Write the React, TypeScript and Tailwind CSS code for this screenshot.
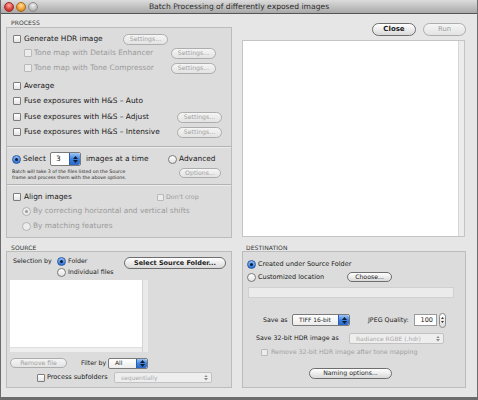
import React from 'react';

const T = 'text-[7.4px] leading-none whitespace-nowrap';

function Cb({ dis = false, small = false }: { dis?: boolean; small?: boolean }) {
  return (
    <span
      className={`block shrink-0 rounded-[1px] border ${
        dis ? 'border-[#b9b9b9] bg-[#ececec]' : 'border-[#7c7c7c] bg-linear-to-b from-[#ffffff] to-[#e4e4e4]'
      } ${small ? 'w-[7px] h-[7px]' : 'w-[8px] h-[8px]'}`}
    />
  );
}

function Rd({ on = false, dis = false }: { on?: boolean; dis?: boolean }) {
  if (on && !dis)
    return (
      <span className="w-[9px] h-[9px] shrink-0 rounded-full border border-[#2a5aa6] bg-linear-to-b from-[#8dbdf5] to-[#2f6fd2] flex items-center justify-center">
        <span className="block w-[3px] h-[3px] rounded-full bg-[#0e1d36]" />
      </span>
    );
  if (on && dis)
    return (
      <span className="w-[9px] h-[9px] shrink-0 rounded-full border border-[#b0b0b0] bg-[#ececec] flex items-center justify-center">
        <span className="block w-[3px] h-[3px] rounded-full bg-[#9a9a9a]" />
      </span>
    );
  return (
    <span
      className={`block w-[9px] h-[9px] shrink-0 rounded-full border ${
        dis ? 'border-[#b4b4b4] bg-[#ececec]' : 'border-[#7a7a7a] bg-linear-to-b from-[#ffffff] to-[#e2e2e2]'
      }`}
    />
  );
}

function Btn({
  children,
  dis = false,
  cls,
  txt = 'text-[6.2px]',
}: {
  children: React.ReactNode;
  dis?: boolean;
  cls: string;
  txt?: string;
}) {
  return (
    <div
      className={`${cls} ${txt} leading-none whitespace-nowrap shrink-0 rounded-full border flex items-center justify-center ${
        dis
          ? 'border-[#adadad] text-[#a0a0a0] bg-linear-to-b from-[#f5f5f5] to-[#e3e3e3]'
          : 'border-[#6e6e6e] text-[#1c1c1c] bg-linear-to-b from-[#ffffff] to-[#d9d9d9]'
      }`}
    >
      {children}
    </div>
  );
}

function BlueArrows() {
  return (
    <div className="w-[11px] h-full shrink-0 bg-linear-to-b from-[#9cc6f6] via-[#3f82dc] to-[#2a68c6] rounded-r-[2px] flex flex-col items-center justify-center gap-[1px] border-l border-[#2b5fae]">
      <svg width="5" height="3" viewBox="0 0 5 3">
        <path d="M0 3 L2.5 0 L5 3 Z" fill="#0d1b33" />
      </svg>
      <svg width="5" height="3" viewBox="0 0 5 3">
        <path d="M0 0 L2.5 3 L5 0 Z" fill="#0d1b33" />
      </svg>
    </div>
  );
}

function GrayArrows() {
  return (
    <div className="w-[11px] h-full shrink-0 flex flex-col items-center justify-center gap-[1px]">
      <svg width="4" height="2.5" viewBox="0 0 4 2.5">
        <path d="M0 2.5 L2 0 L4 2.5 Z" fill="#8a8a8a" />
      </svg>
      <svg width="4" height="2.5" viewBox="0 0 4 2.5">
        <path d="M0 0 L2 2.5 L4 0 Z" fill="#8a8a8a" />
      </svg>
    </div>
  );
}

function Popup({ label, cls, dis = false }: { label: string; cls: string; dis?: boolean }) {
  return (
    <div
      className={`${cls} shrink-0 rounded-[2px] border flex items-center ${
        dis ? 'border-[#c2c2c2] bg-[#eeeeee]' : 'border-[#7a7a7a] bg-linear-to-b from-[#ffffff] to-[#ececec]'
      }`}
    >
      <span className={`flex-1 pl-[6px] text-[6px] leading-none whitespace-nowrap ${dis ? 'text-[#a8a8a8]' : 'text-[#1c1c1c]'}`}>
        {label}
      </span>
      {dis ? <GrayArrows /> : <BlueArrows />}
    </div>
  );
}

function Sep() {
  return <div className="h-[2px] border-t border-[#b3b3b3] border-b border-b-[#ececec]" />;
}

function Label({ children, cls = '' }: { children: React.ReactNode; cls?: string }) {
  return <div className={`${cls} text-[6px] leading-[7px] text-[#333] tracking-[0.1px]`}>{children}</div>;
}

export default function App() {
  const dark = 'text-[#1a1a1a]';
  const gray = 'text-[#9a9a9a]';
  return (
    <div className="w-[478px] h-[400px] bg-[#e6e6e6] border-l border-r border-b-[3px] border-[#6c6c6c] flex flex-col overflow-hidden font-['DejaVu_Sans',sans-serif]">
      {/* Title bar */}
      <div className="h-[14px] shrink-0 grid grid-cols-[1fr_auto_1fr] items-center bg-linear-to-b from-[#dcdcdc] to-[#a9a9a9] border-b border-[#555]">
        <div className="flex items-center gap-[2px] ml-[3px]">
          <span className="block w-[10px] h-[10px] rounded-full border border-[#9a2a24] bg-[radial-gradient(circle_at_50%_30%,#ffb0a8,#e0443e_55%,#a8211b)]" />
          <span className="block w-[10px] h-[10px] rounded-full border border-[#a86a16] bg-[radial-gradient(circle_at_50%_30%,#ffe0a0,#f2a33a_55%,#b8700f)]" />
          <span className="block w-[10px] h-[10px] rounded-full border border-[#8d8d8d] bg-[radial-gradient(circle_at_50%_30%,#f0f0f0,#bdbdbd_60%,#949494)]" />
        </div>
        <div className="text-[7.6px] leading-none text-[#2c2c2c] whitespace-nowrap">
          Batch Processing of differently exposed images
        </div>
        <div />
      </div>

      {/* Body */}
      <div className="flex-1 flex pl-[5px] gap-[10px]">
        {/* Left column */}
        <div className="w-[226px] pt-[4px] flex flex-col">
          <Label cls="h-[9px] pl-[5px] pt-[1px]">PROCESS</Label>
          <div className="h-[211px] border border-[#bcbcbc] bg-[#dcdcdc] flex flex-col pt-[4px]">
            <div className="h-[14px] flex items-center">
              <span className="flex ml-[6px]"><Cb /></span>
              <span className={`ml-[3px] w-[99px] ${T} ${dark}`}>Generate HDR image</span>
              <Btn dis cls="w-[45px] h-[11px]">Settings...</Btn>
            </div>
            <div className="h-[14px] flex items-center">
              <span className="flex ml-[17px]"><Cb dis /></span>
              <span className={`ml-[1px] w-[138px] pl-[1px] ${T} ${gray}`}>Tone map with Details Enhancer</span>
              <Btn dis cls="w-[45px] h-[11px]">Settings...</Btn>
            </div>
            <div className="h-[14px] mt-[1px] flex items-center">
              <span className="flex ml-[17px]"><Cb dis /></span>
              <span className={`ml-[1px] w-[138px] pl-[1px] ${T} ${gray}`}>Tone map with Tone Compressor</span>
              <Btn dis cls="w-[45px] h-[11px]">Settings...</Btn>
            </div>
            <div className="h-[14px] mt-[4px] flex items-center">
              <span className="flex ml-[6px]"><Cb /></span>
              <span className={`ml-[3px] ${T} ${dark}`}>Average</span>
            </div>
            <div className="h-[14px] mt-[1px] flex items-center">
              <span className="flex ml-[6px]"><Cb /></span>
              <span className={`ml-[3px] ${T} ${dark}`}>Fuse exposures with H&amp;S – Auto</span>
            </div>
            <div className="h-[14px] mt-[2px] flex items-center">
              <span className="flex ml-[6px]"><Cb /></span>
              <span className={`ml-[3px] w-[153px] ${T} ${dark}`}>Fuse exposures with H&amp;S – Adjust</span>
              <Btn dis cls="w-[45px] h-[11px]">Settings...</Btn>
            </div>
            <div className="h-[14px] mt-[1px] flex items-center">
              <span className="flex ml-[6px]"><Cb /></span>
              <span className={`ml-[3px] w-[153px] ${T} ${dark}`}>Fuse exposures with H&amp;S – Intensive</span>
              <Btn dis cls="w-[45px] h-[11px]">Settings...</Btn>
            </div>
            <div className="mt-[7px]"><Sep /></div>

            <div className="h-[14px] mt-[4px] flex items-center">
              <span className="flex ml-[5px]"><Rd on /></span>
              <span className={`ml-[2px] w-[27px] ${T} ${dark}`}>Select</span>
              <div className="w-[31px] h-[14px] shrink-0 rounded-[2px] border border-[#7a7a7a] bg-white flex items-center">
                <span className={`flex-1 pl-[5px] ${T} ${dark}`}>3</span>
                <BlueArrows />
              </div>
              <span className={`ml-[5px] w-[82px] ${T} ${dark}`}>images at a time</span>
              <Rd />
              <span className={`ml-[2px] ${T} ${dark}`}>Advanced</span>
            </div>
            <div className="h-[14px] mt-[1px] flex items-start">
              <div className="ml-[5px] w-[167px] pt-[2px] text-[4.7px] leading-[6px] text-[#222] whitespace-nowrap">
                Batch will take 3 of the files listed on the Source
                <br />
                frame and process them with the above options.
              </div>
              <Btn dis cls="w-[42px] h-[10px] mt-[1px]">Options...</Btn>
            </div>
            <div className="mt-[3px]"><Sep /></div>

            <div className="h-[14px] mt-[4px] flex items-center">
              <span className="flex ml-[6px]"><Cb /></span>
              <span className={`ml-[3px] w-[133px] ${T} ${dark}`}>Align images</span>
              <Cb dis small />
              <span className={`ml-[2px] text-[6.3px] leading-none whitespace-nowrap ${gray}`}>Don't crop</span>
            </div>
            <div className="h-[14px] flex items-center">
              <span className="flex ml-[15px]"><Rd on dis /></span>
              <span className={`ml-[2px] ${T} ${gray}`}>By correcting horizontal and vertical shifts</span>
            </div>
            <div className="h-[14px] mt-[1px] flex items-center">
              <span className="flex ml-[15px]"><Rd dis /></span>
              <span className={`ml-[2px] ${T} ${gray}`}>By matching features</span>
            </div>
          </div>

          <div className="h-[13px] flex items-end">
            <Label cls="pl-[5px]">SOURCE</Label>
          </div>
          <div className="h-[137px] border border-[#bcbcbc] bg-[#dcdcdc] flex flex-col">
            <div className="flex items-start pt-[4px]">
              <span className="ml-[6px] w-[44px] h-[11px] flex items-center text-[6.3px] leading-none whitespace-nowrap text-[#1a1a1a]">
                Selection by
              </span>
              <div className="w-[67px] flex flex-col">
                <div className="h-[11px] flex items-center">
                  <Rd on />
                  <span className="ml-[2px] text-[6.3px] leading-none text-[#1a1a1a]">Folder</span>
                </div>
                <div className="h-[11px] flex items-center">
                  <Rd />
                  <span className="ml-[2px] text-[6.3px] leading-none whitespace-nowrap text-[#1a1a1a]">Individual files</span>
                </div>
              </div>
              <Btn cls="w-[102px] h-[12px] mt-[1px]" txt="text-[6.5px] font-semibold">Select Source Folder...</Btn>
            </div>
            <div className="ml-[3px] mt-[2px] w-[138px] h-[72px] flex bg-white">
              <div className="flex-1 flex flex-col">
                <div className="flex-1 bg-white" />
                <div className="h-[5px] bg-[#eeeeee] border-t border-[#dedede]" />
              </div>
              <div className="w-[6px] bg-[#eaeaea] border-l border-[#d4d4d4]" />
            </div>
            <div className="h-[10px] mt-[6px] flex items-center">
              <Btn dis cls="ml-[3px] w-[57px] h-[10px]">Remove file</Btn>
              <span className="ml-[14px] w-[27px] text-[6.3px] leading-none whitespace-nowrap text-[#1a1a1a]">Filter by</span>
              <Popup label="All" cls="w-[40px] h-[11px]" />
            </div>
            <div className="h-[11px] mt-[4px] flex items-center">
              <span className="flex ml-[30px]"><Cb /></span>
              <span className="ml-[2px] w-[67px] text-[6.5px] leading-none whitespace-nowrap text-[#1a1a1a]">Process subfolders</span>
              <Popup dis label="sequentially" cls="w-[98px] h-[11px]" />
            </div>
          </div>
        </div>

        {/* Right column */}
        <div className="w-[224px] pt-[9px] flex flex-col">
          <div className="h-[13px] flex justify-end gap-[7px]">
            <Btn cls="w-[44px] h-[13px]" txt="text-[7px] font-semibold">Close</Btn>
            <Btn dis cls="w-[43px] h-[13px]" txt="text-[6.8px]">Run</Btn>
          </div>
          <div className="mt-[4px] w-[223px] h-[197px] border border-[#c4c4c4] bg-white flex">
            <div className="flex-1" />
            <div className="w-[6px] bg-[#ececec] border-l border-[#d6d6d6]" />
          </div>

          <div className="h-[14px] flex items-end">
            <Label cls="pl-[4px]">DESTINATION</Label>
          </div>
          <div className="h-[137px] border border-[#bcbcbc] bg-[#dcdcdc] flex flex-col">
            <div className="h-[12px] mt-[6px] flex items-center">
              <span className="flex ml-[4px]"><Rd on /></span>
              <span className="ml-[2px] text-[6.5px] leading-none whitespace-nowrap text-[#1a1a1a]">Created under Source Folder</span>
            </div>
            <div className="h-[12px] mt-[1px] flex items-center">
              <span className="flex ml-[4px]"><Rd /></span>
              <span className="ml-[2px] w-[89px] text-[6.5px] leading-none whitespace-nowrap text-[#1a1a1a]">Customized location</span>
              <Btn cls="w-[45px] h-[10px]">Choose...</Btn>
            </div>
            <div className="mt-[4px] ml-[5px] w-[206px] h-[11px] bg-[#ebebeb] border border-[#d0d0d0]" />
            <div className="h-[12px] mt-[16px] flex items-center">
              <span className="ml-[20px] w-[29px] text-[6.3px] leading-none whitespace-nowrap text-[#1a1a1a]">Save as</span>
              <Popup label="TIFF 16-bit" cls="w-[58px] h-[12px]" />
              <span className="ml-[18px] w-[46px] text-[6.3px] leading-none whitespace-nowrap text-[#1a1a1a]">JPEG Quality:</span>
              <div className="w-[23px] h-[12px] bg-white border border-[#9a9a9a] flex items-center justify-end pr-[3px] text-[6.5px] leading-none text-[#1a1a1a]">
                100
              </div>
              <div className="ml-[2px] w-[7px] h-[15px] rounded-full border border-[#8a8a8a] bg-linear-to-b from-[#ffffff] to-[#dddddd] flex flex-col items-center justify-center gap-[2px]">
                <svg width="3" height="2" viewBox="0 0 3 2"><path d="M0 2 L1.5 0 L3 2 Z" fill="#333" /></svg>
                <svg width="3" height="2" viewBox="0 0 3 2"><path d="M0 0 L1.5 2 L3 0 Z" fill="#333" /></svg>
              </div>
            </div>
            <div className="h-[11px] mt-[7px] flex items-center">
              <span className="ml-[13px] w-[93px] text-[6.3px] leading-none whitespace-nowrap text-[#1a1a1a]">Save 32-bit HDR image as</span>
              <Popup dis label="Radiance RGBE (.hdr)" cls="w-[95px] h-[11px]" />
            </div>
            <div className="h-[12px] mt-[2px] flex items-center">
              <span className="flex ml-[18px]"><Cb dis small /></span>
              <span className="ml-[3px] text-[6.3px] leading-none whitespace-nowrap text-[#a0a0a0]">Remove 32-bit HDR image after tone mapping</span>
            </div>
            <div className="h-[11px] mt-[10px] flex items-center">
              <Btn cls="ml-[66px] w-[83px] h-[11px]">Naming options...</Btn>
            </div>
          </div>
        </div>
      </div>
    </div>
  );
}
